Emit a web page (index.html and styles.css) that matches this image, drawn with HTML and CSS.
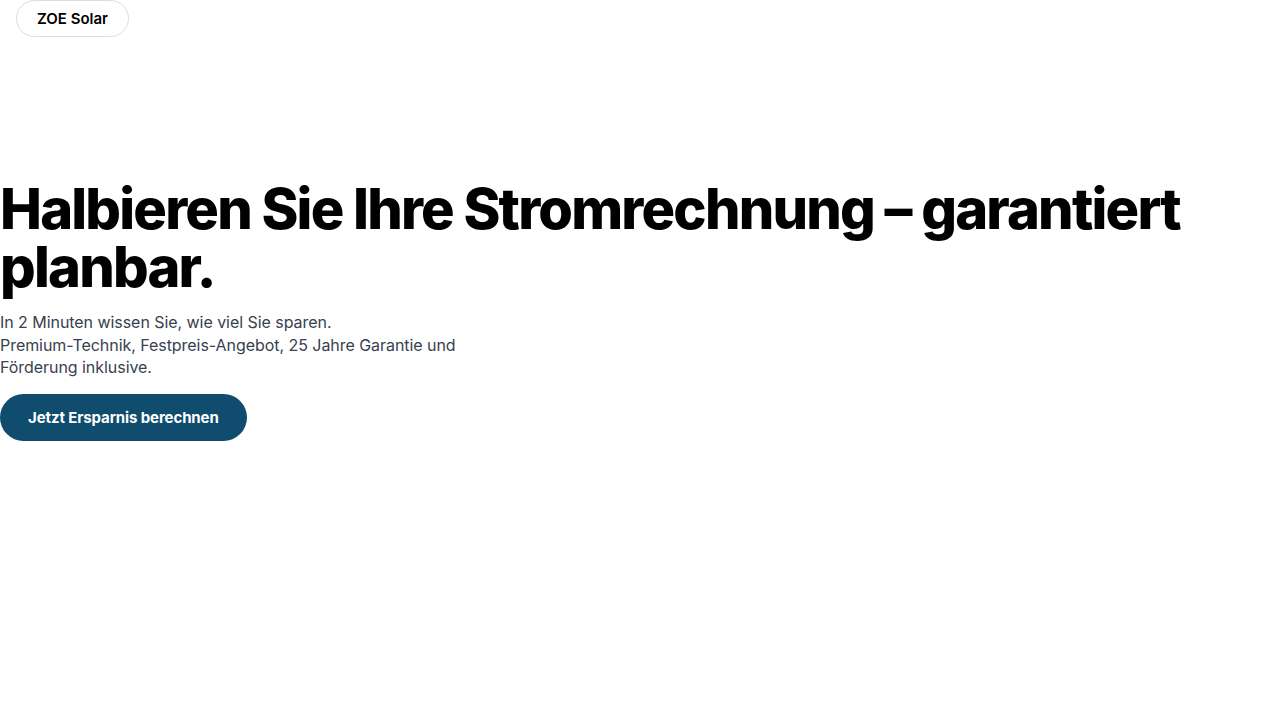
FILE: index.html
```html
<!DOCTYPE html>
<html lang="de">
<head>
<meta charset="utf-8">
<title>ZOE Solar</title>
<link rel="stylesheet" href="styles.css">
</head>
<body>
<header class="topbar">
  <a class="brand-pill" href="#">ZOE Solar</a>
</header>
<main class="hero">
  <h1 class="hero-title">Halbieren Sie Ihre Stromrechnung – garantiert planbar.</h1>
  <p class="hero-text">In 2 Minuten wissen Sie, wie viel Sie sparen.<br>Premium-Technik, Festpreis-Angebot, 25 Jahre Garantie und Förderung inklusive.</p>
  <a class="cta" href="#">Jetzt Ersparnis berechnen</a>
</main>
</body>
</html>
```
FILE: styles.css
```css
html, body {
  margin: 0;
  padding: 0;
  background: #ffffff;
  font-family: Inter, "Noto Sans", sans-serif;
  color: #000;
}
.topbar {
  display: flex;
  padding-left: 16px;
}
.brand-pill {
  display: inline-flex;
  align-items: center;
  justify-content: center;
  height: 37px;
  box-sizing: border-box;
  padding: 0 20px;
  border: 1px solid #d9dde3;
  border-radius: 999px;
  font-size: 15px;
  font-weight: 600;
  color: #000;
  text-decoration: none;
}
.hero {
  padding-top: 143px;
  display: flex;
  flex-direction: column;
  align-items: flex-start;
}
.hero-title {
  margin: 0;
  font-size: 56px;
  font-weight: 800;
  line-height: 58px;
  letter-spacing: -0.032em;
  max-width: 1240px;
}
.hero-text {
  margin: 15px 0 0;
  font-size: 16px;
  line-height: 22.5px;
  letter-spacing: -0.05px;
  color: #374151;
  max-width: 460px;
}
.cta {
  margin-top: 15px;
  display: inline-flex;
  align-items: center;
  height: 47px;
  padding: 0 28px;
  background: #0f4c6e;
  color: #ffffff;
  border-radius: 999px;
  font-size: 15px;
  font-weight: 700;
  letter-spacing: -0.1px;
  text-decoration: none;
}
```
